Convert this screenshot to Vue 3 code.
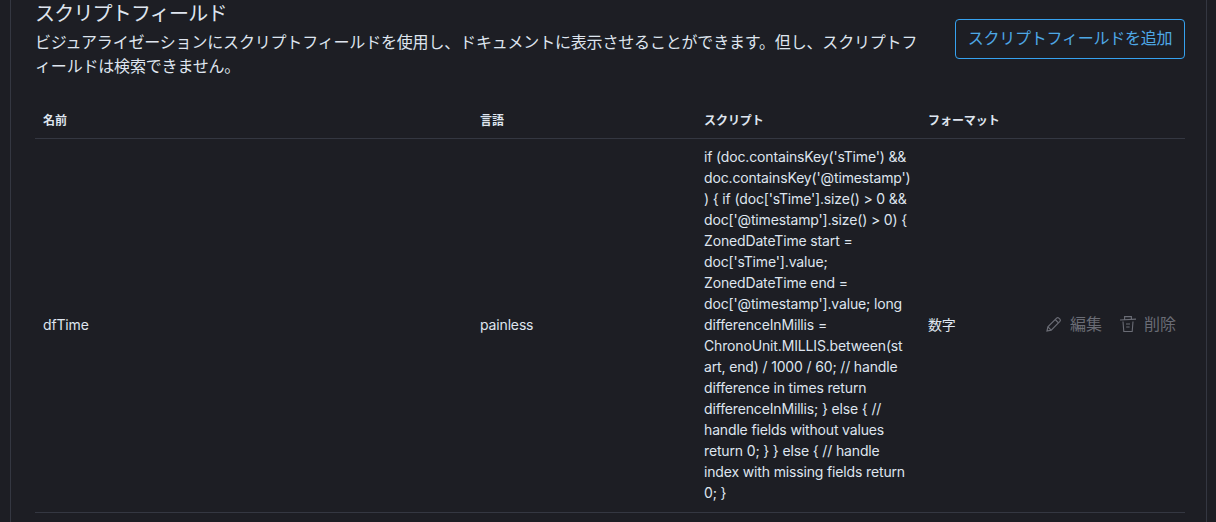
<script setup>
const scriptText = "if (doc.containsKey('sTime') && doc.containsKey('@timestamp')) { if (doc['sTime'].size() > 0 && doc['@timestamp'].size() > 0) { ZonedDateTime start = doc['sTime'].value; ZonedDateTime end = doc['@timestamp'].value; long differenceInMillis = ChronoUnit.MILLIS.between(st\nart, end) / 1000 / 60; // handle difference in times return differenceInMillis; } else { // handle fields without values return 0; } } else { // handle index with missing fields return 0; }"
</script>

<template>
  <div class="page" lang="ja">
    <section class="panel">
      <header class="head">
        <div class="intro">
          <h2 class="title">スクリプトフィールド</h2>
          <p class="desc">ビジュアライゼーションにスクリプトフィールドを使用し、ドキュメントに表示させることができます。但し、スクリプトフィールドは検索できません。</p>
        </div>
        <button class="add" type="button"><span class="add-label">スクリプトフィールドを追加</span></button>
      </header>
      <table class="table">
        <colgroup>
          <col class="c-name" />
          <col class="c-lang" />
          <col class="c-script" />
          <col class="c-format" />
          <col />
        </colgroup>
        <thead>
          <tr>
            <th>名前</th>
            <th>言語</th>
            <th>スクリプト</th>
            <th>フォーマット</th>
            <th></th>
          </tr>
        </thead>
        <tbody>
          <tr>
            <td>dfTime</td>
            <td>painless</td>
            <td class="script">{{ scriptText }}</td>
            <td>数字</td>
            <td>
              <div class="actions">
                <span class="action">
                  <svg class="icon" viewBox="0 0 16 16" fill="none" stroke="currentColor" stroke-width="1.2">
                    <path d="M1 15l.9-4.2L10.6 2.1a1.6 1.6 0 0 1 2.2 0l1.1 1.1a1.6 1.6 0 0 1 0 2.2L5.2 14.1z" />
                    <path d="M1.9 10.8l3.3 3.3M9.2 3.5l3.3 3.3" />
                  </svg>
                  編集
                </span>
                <span class="action">
                  <svg class="icon" viewBox="0 0 16 16" fill="none" stroke="currentColor" stroke-width="1.1">
                    <path d="M0 4l16-.9M4.6 3.6V.6h6.8v2.6" />
                    <path d="M3 5.5l.8 10h8.4l.8-10" />
                    <path d="M6 8h4M6.2 11h3.4" />
                  </svg>
                  削除
                </span>
              </div>
            </td>
          </tr>
        </tbody>
      </table>
    </section>
  </div>
</template>

<style>
html, body { margin: 0; background: #1d1e24; }
</style>

<style scoped>
.page {
  width: 1216px;
  height: 522px;
  overflow: hidden;
  box-sizing: border-box;
  padding: 0 9px 0 10px;
  background: #1d1e24;
  font-family: Inter, "Noto Sans CJK JP", sans-serif;
  color: #dfe5ef;
}
.panel {
  box-sizing: border-box;
  height: 522px;
  padding: 0 20px 0 24px;
  border-left: 1px solid #343741;
  border-right: 1px solid #343741;
}
.head {
  display: flex;
  justify-content: space-between;
  align-items: flex-start;
  height: 102px;
}
.intro { width: 884px; }
.title {
  margin: 0;
  padding-top: 2px;
  font-size: 20px;
  font-weight: 400;
  line-height: 25px;
  letter-spacing: -0.8px;
}
.desc {
  margin: 3px 0 0;
  font-size: 16px;
  line-height: 24px;
  letter-spacing: -0.18px;
  line-break: loose;
}
.add {
  box-sizing: border-box;
  width: 230px;
  height: 40px;
  margin-top: 19px;
  margin-right: 1px;
  padding: 0 0 3px;
  background: transparent;
  border: 1px solid #36a2ef;
  border-radius: 4px;
  color: #4ea8e6;
  font: inherit;
  font-size: 16px;
  letter-spacing: -0.25px;
  line-height: 24px;
}
.table {
  width: 1150px;
  table-layout: fixed;
  border-collapse: collapse;
}
.c-name { width: 437px; }
.c-lang { width: 224px; }
.c-script { width: 224px; }
.c-format { width: 112px; }
th {
  height: 36px;
  box-sizing: border-box;
  padding: 2px 8px 0;
  text-align: left;
  font-size: 12px;
  font-weight: 700;
  line-height: 18px;
  letter-spacing: -0.05px;
  border-bottom: 1px solid #343741;
}
td {
  padding: 7px 8px 9px;
  font-size: 14px;
  line-height: 21px;
  letter-spacing: -0.15px;
  vertical-align: middle;
  border-bottom: 1px solid #343741;
}
.script { overflow-wrap: anywhere; white-space: pre-line; }
.actions {
  display: flex;
  justify-content: flex-end;
  gap: 18px;
  margin-right: 1px;
}
.action {
  display: inline-flex;
  align-items: center;
  gap: 8px;
  font-size: 16px;
  line-height: 24px;
  letter-spacing: 0;
  color: #6a6c75;
  white-space: nowrap;
}
.icon { width: 16px; height: 16px; flex: none; }
</style>
